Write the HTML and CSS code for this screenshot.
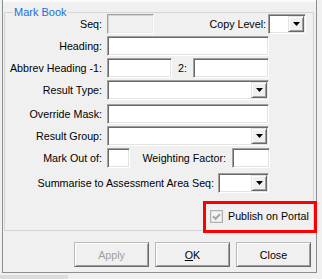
FILE: index.html
```html
<!DOCTYPE html>
<html>
<head>
<meta charset="utf-8">
<title>Mark Book</title>
<link rel="stylesheet" href="styles.css">
</head>
<body>
<div class="panel">
  <div class="group">
    <div class="group-title">Mark Book</div>
    <div class="rows">
      <div class="row row-first">
        <span class="lbl">Seq:</span>
        <span class="box disabled w-seq"></span>
        <span class="lbl-fill">Copy Level:</span>
        <span class="box combo w-copy"><span class="drop"><svg viewBox="0 0 7 4"><path d="M0 0h7L3.5 4z"/></svg></span></span>
      </div>
      <div class="row">
        <span class="lbl">Heading:</span>
        <span class="box w-full"></span>
      </div>
      <div class="row">
        <span class="lbl">Abbrev Heading -1:</span>
        <span class="box w-abbrev1"></span>
        <span class="lbl-two">2:</span>
        <span class="box w-abbrev2"></span>
      </div>
      <div class="row">
        <span class="lbl">Result Type:</span>
        <span class="box combo w-full"><span class="drop"><svg viewBox="0 0 7 4"><path d="M0 0h7L3.5 4z"/></svg></span></span>
      </div>
      <div class="row row-gap4">
        <span class="lbl">Override Mask:</span>
        <span class="box w-full"></span>
      </div>
      <div class="row">
        <span class="lbl">Result Group:</span>
        <span class="box combo w-full"><span class="drop"><svg viewBox="0 0 7 4"><path d="M0 0h7L3.5 4z"/></svg></span></span>
      </div>
      <div class="row">
        <span class="lbl">Mark Out of:</span>
        <span class="box w-markout"></span>
        <span class="lbl-weight">Weighting Factor:</span>
        <span class="box w-weight"></span>
      </div>
      <div class="row row-gap5">
        <span class="lbl lbl-wide">Summarise to Assessment Area Seq:</span>
        <span class="box combo w-summ"><span class="drop"><svg viewBox="0 0 7 4"><path d="M0 0h7L3.5 4z"/></svg></span></span>
      </div>
    </div>
    <div class="check-row">
      <svg class="check" width="13" height="13" viewBox="0 0 13 13"><rect x=".5" y=".5" width="12" height="12" fill="#f4f4f4" stroke="#b1b1b1"/><rect x="1.5" y="1.5" width="10" height="10" fill="none" stroke="#e2e2e2"/><path d="M3 6.2l2.6 2.6L10 4.2" fill="none" stroke="#a6a6a6" stroke-width="2"/></svg>
      <span class="check-label">Publish on Portal</span>
    </div>
  </div>
  <div class="buttons">
    <button class="btn disabled" type="button">Apply</button>
    <button class="btn" type="button"><u>O</u>K</button>
    <button class="btn" type="button">Close</button>
  </div>
</div>
<div class="foot"><div class="foot-grip"></div></div>
<div class="annot"></div>
</body>
</html>
```

FILE: styles.css
```css
* { box-sizing: border-box; }

html, body {
  margin: 0;
  padding: 0;
}

body {
  position: relative;
  width: 322px;
  height: 279px;
  overflow: hidden;
  background: #f0f0f0;
  font-family: "Liberation Sans", Arial, sans-serif;
  font-size: 10.7px;
  color: #000;
}

.panel {
  margin-left: 2px;
  width: 315px;
  height: 273px;
  padding-top: 12px;
  border-left: 1px solid #8e8e8e;
  border-right: 1px solid #8e8e8e;
  border-bottom: 1px solid #8e8e8e;
  background: linear-gradient(#fbfbfb, #fbfbfb) top left / 100% 2px no-repeat, #f0f0f0;
}

.group {
  margin: 0 2px 0 1px;
  height: 219px;
  border: 1px solid #d5d5d5;
}

.group-title {
  width: max-content;
  margin: -7px 0 -6px 8px;
  padding: 0 1px;
  line-height: 13px;
  font-size: 11px;
  color: #1e6ed8;
  background: #f0f0f0;
}

.rows {
  display: flex;
  flex-direction: column;
  gap: 2px;
  padding-top: 1px;
}

.row {
  display: flex;
  align-items: center;
  height: 20px;
}

.row-first { padding-right: 7px; }
.row-gap4 { margin-top: 2px; }
.row-gap5 { margin-top: 3px; }

.lbl {
  width: 97px;
  margin-right: 5px;
  text-align: right;
  white-space: nowrap;
  line-height: 13px;
}

.lbl-wide {
  width: 209px;
  margin-right: 4px;
}

.lbl-fill {
  flex: 1;
  margin-right: 2px;
  text-align: right;
  white-space: nowrap;
  line-height: 13px;
}

.lbl-two {
  width: 15px;
  margin-left: 6px;
  line-height: 13px;
}

.lbl-weight {
  width: 102px;
  padding-right: 6px;
  text-align: right;
  white-space: nowrap;
  line-height: 13px;
}

.box {
  display: block;
  height: 20px;
  background: #fff;
  border: 1px solid;
  border-color: #a0a0a0 #fff #fff #a0a0a0;
  box-shadow: inset 1px 1px 0 #696969, inset -1px -1px 0 #e3e3e3;
}

.box.disabled {
  background: #f0f0f0;
  border-color: #a0a0a0 #fff #fff #a0a0a0;
  box-shadow: inset 1px 1px 0 #d4d4d4, inset -1px -1px 0 #e9e9e9;
}

.w-seq { width: 47px; }
.w-copy { width: 38px; }
.w-full { width: 162px; }
.w-abbrev1 { width: 65px; }
.w-abbrev2 { width: 76px; }
.w-markout { width: 23px; }
.w-weight { width: 38px; }
.w-summ { width: 51px; }

.combo {
  display: flex;
  justify-content: flex-end;
  padding: 1px;
}

.drop {
  display: flex;
  align-items: center;
  justify-content: center;
  width: 16px;
  height: 16px;
  background: #f0f0f0;
  border: 1px solid;
  border-color: #e3e3e3 #696969 #696969 #e3e3e3;
  box-shadow: inset 1px 1px 0 #fff, inset -1px -1px 0 #a0a0a0;
}

.drop svg {
  display: block;
  width: 7px;
  height: 4px;
  fill: #000;
}

.check-row {
  display: flex;
  align-items: center;
  gap: 5px;
  height: 15px;
  margin-top: 16px;
  padding-left: 205px;
}

.check { display: block; flex: none; }

.check-label {
  line-height: 13px;
  white-space: nowrap;
}

.buttons {
  display: flex;
  justify-content: flex-end;
  gap: 6px;
  margin-top: 11px;
  padding-right: 5px;
}

.btn {
  display: flex;
  align-items: center;
  justify-content: center;
  width: 75px;
  height: 25px;
  padding: 0;
  margin: 0;
  font: inherit;
  color: #000;
  background: #f0f0f0;
  border: 1px solid;
  border-color: #b9b9b9 #696969 #696969 #b9b9b9;
  box-shadow: inset 1px 1px 0 #fff, inset -1px -1px 0 #a0a0a0;
}

.btn.disabled { color: #a0a0a0; }

.btn u { text-decoration-thickness: 1px; text-underline-offset: 1px; }

.foot {
  height: 6px;
  padding-top: 2px;
}

.foot-grip {
  width: 68px;
  height: 4px;
  background: #dcdcdc;
}

.annot {
  position: absolute;
  left: 203px;
  top: 201px;
  width: 114px;
  height: 32px;
  border: 3px solid #f00;
}
```
